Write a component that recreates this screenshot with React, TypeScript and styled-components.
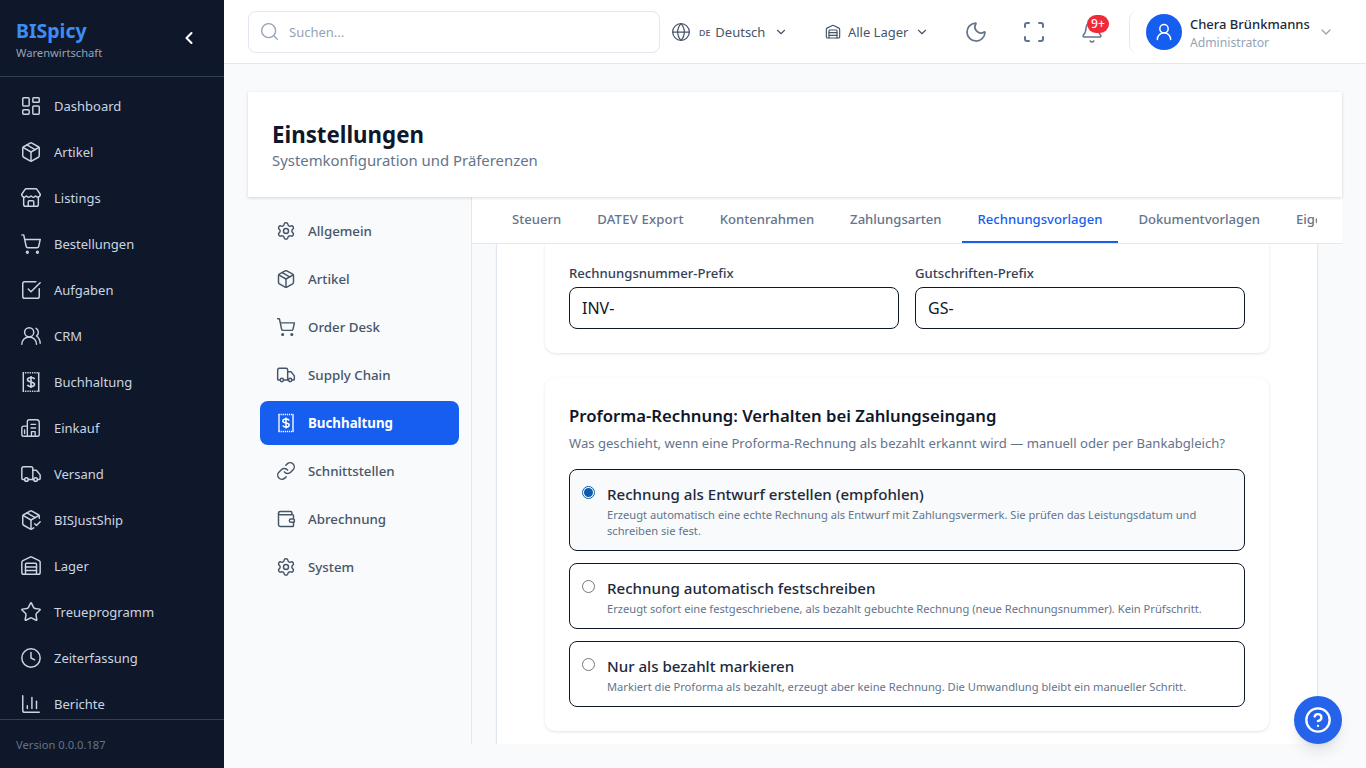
import React from "react";
import styled, { createGlobalStyle } from "styled-components";
import {
  LayoutDashboard, Package, Store, ShoppingCart, SquareCheckBig, UsersRound, Truck, Warehouse, Star, Clock, ChartColumn,
  ChevronLeft, ChevronDown, Search, Globe, Moon, Scan, Bell, UserRound, Settings, Link, Wallet, CircleHelp, PackageCheck,
} from "lucide-react";

const Global = createGlobalStyle`
  * { box-sizing: border-box; }
  html, body { margin: 0; padding: 0; height: 100%; overflow: hidden; }
  body { font-family: "Noto Sans", "Liberation Sans", sans-serif; background: #f8fafc; color: #0f172a; }
`;

const Shell = styled.div`
  display: flex; width: 1366px; height: 768px; overflow: hidden;
`;
const Sidebar = styled.aside`
  width: 224px; flex: none; height: 768px; background: #0f172a; display: flex; flex-direction: column;
`;
const Brand = styled.div`
  height: 77px; flex: none; border-bottom: 1px solid #334155; padding: 19px 26px 0 16px;
  display: flex; justify-content: space-between; align-items: flex-start;
`;
const BrandName = styled.div`
  font-size: 19.5px; line-height: 24px; font-weight: 700; color: #3b8ef6;
`;
const BrandSub = styled.div`
  font-size: 11.2px; line-height: 16px; color: #94a3b8; margin-top: 2px;
`;
const Collapse = styled.span`
  color: #fff; display: flex; margin-top: 9px; margin-right: -1px;
`;
const SideNav = styled.nav`
  flex: 1; min-height: 0; overflow: hidden; padding-top: 6px;
`;
const SideItem = styled.div`
  height: 46px; display: flex; align-items: center; gap: 12px; padding-left: 20px;
  color: #cbd5e1; font-size: 13px;
  svg { flex: none; }
`;
const SideFoot = styled.div`
  height: 49px; flex: none; border-top: 1px solid #334155; padding: 17px 16px 0;
  font-size: 11.2px; line-height: 16px; color: #64748b;
`;
const Main = styled.div`
  flex: 1; min-width: 0; display: flex; flex-direction: column; position: relative;
`;
const Header = styled.header`
  height: 64px; flex: none; background: #fff; border-bottom: 1px solid #e2e8f0;
  display: flex; align-items: center; padding-left: 24px;
`;
const SearchBox = styled.div`
  width: 412px; height: 42px; border: 1px solid #e2e8f0; border-radius: 8px; display: flex; align-items: center;
  gap: 9px; padding-left: 10px; color: #94a3b8; font-size: 13px; background: #fff; flex: none;
`;
const Lang = styled.div`
  display: flex; align-items: center; margin-left: 11px; color: #475569; font-size: 13px; flex: none; white-space: nowrap;
`;
const Small = styled.span`
  font-size: 11px; margin: 0 5px 0 8px; font-variant: small-caps; text-transform: lowercase;
`;
const LangChevron = styled(ChevronDown)`
  margin-left: 9px;
`;
const Depot = styled.div`
  display: flex; align-items: center; color: #475569; font-size: 13px; margin-left: 37px; flex: none; white-space: nowrap;
`;
const DepotLabel = styled.span`
  margin-left: 6.5px;
`;
const DepotChevron = styled(ChevronDown)`
  margin-left: 6.5px;
`;
const IconBtn = styled.span<{ $ml: number }>`
  display: flex; color: #64748b; margin-left: ${p => p.$ml}px; position: relative; flex: none;
`;
const Badge = styled.span`
  position: absolute; left: 7px; top: -5px; height: 18px; min-width: 22px; border-radius: 9px; background: #ef2b3a;
  color: #fff; font-size: 12px; line-height: 18px; text-align: center; font-weight: 500;
`;
const UserBox = styled.div`
  display: flex; align-items: center; margin-left: 25px; padding-left: 16px; height: 44px;
  border-left: 1px solid #e2e8f0; border-radius: 10px 0 0 10px; flex: none;
`;
const Avatar = styled.div`
  width: 36px; height: 36px; border-radius: 50%; background: #155eef; color: #fff; display: flex; align-items: center; justify-content: center;
`;
const UserText = styled.div`
  margin-left: 8px; width: 128px; padding-top: 2px;
`;
const UserName = styled.div`
  font-size: 13px; line-height: 18px; font-weight: 500; color: #1e293b; white-space: nowrap;
`;
const UserRole = styled.div`
  font-size: 12.2px; line-height: 16px; color: #94a3b8; margin-top: 2px;
`;
const Content = styled.main`
  flex: 1; min-height: 0; padding: 28px 24px 24px; display: flex; flex-direction: column;
`;
const TitleCard = styled.div`
  height: 105px; flex: none; background: #fff; box-shadow: 0 1px 3px rgba(15,23,42,.16); padding: 28px 24px 0;
  position: relative; z-index: 1;
`;
const Title = styled.h1`
  margin: 0; font-size: 22.3px; line-height: 30px; font-weight: 700; color: #0f172a;
`;
const Subtitle = styled.p`
  margin: 0; font-size: 14.9px; line-height: 20px; color: #64748b;
`;
const Panels = styled.div`
  flex: 1; min-height: 0; display: flex;
`;
const SettingsNav = styled.nav`
  width: 224px; flex: none; border-right: 1px solid #e2e8f0; padding: 12px 12px 0;
  display: flex; flex-direction: column; gap: 4px;
`;
const SettingsItem = styled.div<{ $active?: boolean }>`
  height: 44px; border-radius: 8px; display: flex; align-items: center; gap: 12px; padding-left: 16px;
  font-size: 13.3px; font-weight: ${p => p.$active ? 700 : 500};
  color: ${p => p.$active ? "#fff" : "#475569"}; background: ${p => p.$active ? "#155eef" : "transparent"};
`;
const Right = styled.div`
  flex: 1; min-width: 0; display: flex; flex-direction: column; background: #fff;
`;
const Tabs = styled.div`
  height: 47px; flex: none; background: #fff; border-bottom: 1px solid #e2e8f0; display: flex; padding: 0 24px; overflow: hidden;
`;
const TabRow = styled.div`
  display: flex; gap: 4px; overflow: hidden; width: 821px;
`;
const Tab = styled.div<{ $active?: boolean; $track?: boolean }>`
  height: 46px; padding: 0 16px; display: flex; align-items: center; white-space: nowrap; flex: none;
  font-size: 13.1px; font-weight: 500; color: ${p => p.$active ? "#155eef" : "#64748b"};
  letter-spacing: ${p => p.$track ? "0.2px" : "0"};
  border-bottom: 2px solid ${p => p.$active ? "#155eef" : "transparent"};
`;
const Scroll = styled.div`
  flex: 1; min-height: 0; overflow: hidden; background: #f8fafc; padding: 0 24px;
`;
const Sheet = styled.div`
  background: #fff; height: 100%; border-left: 1px solid #e2e8f0; border-right: 1px solid #e2e8f0;
  padding: 0 48px; box-shadow: 0 1px 2px rgba(15,23,42,.05);
`;
const Card = styled.section`
  background: #fff; border-radius: 0 0 10px 10px; box-shadow: 0 1px 3px rgba(15,23,42,.12); padding: 20px 24px 24px;
  & + & { border-radius: 10px; margin-top: 25px; padding: 26px 24px 24px; }
`;
const FieldGrid = styled.div`
  display: grid; grid-template-columns: 1fr 1fr; gap: 16px;
`;
const Label = styled.label`
  display: block; font-size: 13.15px; line-height: 18px; font-weight: 500; color: #334155; margin-bottom: 5px;
`;
const Input = styled.div`
  height: 42px; border: 1px solid #0f172a; border-radius: 8px; padding: 0 12px; display: flex; align-items: center; font-size: 16px; color: #0f172a;
`;
const CardTitle = styled.h2`
  margin: 0; font-size: 16.7px; line-height: 24px; font-weight: 600; color: #0f172a;
`;
const CardText = styled.p`
  margin: 5px 0 16px; font-size: 13.1px; line-height: 20px; color: #64748b;
`;
const Options = styled.div`
  display: flex; flex-direction: column; gap: 12px;
`;
const Option = styled.div<{ $checked?: boolean }>`
  border: 1px solid #0f172a; border-radius: 8px; padding: 14px 12px 11px; display: flex; gap: 12px;
  background: ${p => p.$checked ? "#f8fafc" : "#fff"};
`;
const Radio = styled.span<{ $checked?: boolean }>`
  width: 13px; height: 13px; flex: none; border-radius: 50%; margin-top: 1.5px;
  border: 1px solid ${p => p.$checked ? "#0b5cad" : "#767676"}; background: #fff;
  display: flex; align-items: center; justify-content: center;
  &::after { content: ""; width: 9px; height: 9px; border-radius: 50%; background: ${p => p.$checked ? "#0b5cad" : "transparent"}; }
`;
const OptionBody = styled.div`
  flex: 1; min-width: 0;
`;
const OptionTitle = styled.div`
  font-size: 15.1px; line-height: 20px; font-weight: 500; color: #1e293b;
`;
const OptionText = styled.div`
  font-size: 11.15px; line-height: 16px; color: #64748b; margin-top: 3px;
`;
const Help = styled.div`
  position: absolute; right: 24px; bottom: 24px; width: 48px; height: 48px; border-radius: 50%; background: #2563eb; color: #fff;
  display: flex; align-items: center; justify-content: center; box-shadow: 0 10px 15px -3px rgba(0,0,0,.1), 0 4px 6px -4px rgba(0,0,0,.1);
`;

const Receipt = ({ size = 22 }: { size?: number }) => (
  <svg width={size} height={size} viewBox="0 0 24 24" fill="none" stroke="currentColor" strokeWidth="1.6">
    <path d="M3.6 1.5v21M20.4 1.5v21" />
    <path d="M3 1.8h18M3 22.2h18" strokeDasharray="1.5 1" />
    <path d="M15.8 9c-.4-1.2-1.9-1.9-3.8-1.9-2.2 0-3.8 1-3.8 2.5 0 3.3 7.6 1.7 7.6 4.8 0 1.5-1.6 2.5-3.8 2.5-1.9 0-3.4-.7-3.8-1.9M12 5.4v13.2" strokeWidth="1.8" />
  </svg>
);

const Office = ({ size = 22 }: { size?: number }) => (
  <svg width={size} height={size} viewBox="0 0 24 24" fill="none" stroke="currentColor" strokeWidth="1.5" strokeLinejoin="round" strokeLinecap="round">
    <path d="M8 21V5a2 2 0 0 1 2-2h8a3 3 0 0 1 3 3v13a2 2 0 0 1-2 2H8Z" />
    <path d="M8 10H4a2 2 0 0 0-2 2v7a2 2 0 0 0 2 2h4M5 14v4" />
    <path d="M12 8h5M12 12h5M12.5 21v-5h4v5" />
  </svg>
);

const sideItems: [any, string][] = [
  [LayoutDashboard, "Dashboard"], [Package, "Artikel"], [Store, "Listings"], [ShoppingCart, "Bestellungen"],
  [SquareCheckBig, "Aufgaben"], [UsersRound, "CRM"], [Receipt, "Buchhaltung"], [Office, "Einkauf"], [Truck, "Versand"],
  [PackageCheck, "BISJustShip"], [Warehouse, "Lager"], [Star, "Treueprogramm"], [Clock, "Zeiterfassung"], [ChartColumn, "Berichte"],
];
const settingsItems: [any, string][] = [
  [Settings, "Allgemein"], [Package, "Artikel"], [ShoppingCart, "Order Desk"], [Truck, "Supply Chain"], [Receipt, "Buchhaltung"],
  [Link, "Schnittstellen"], [Wallet, "Abrechnung"], [Settings, "System"],
];
const tabs = ["Steuern", "DATEV Export", "Kontenrahmen", "Zahlungsarten", "Rechnungsvorlagen", "Dokumentvorlagen", "Eigene Felder"];
const options = [
  ["Rechnung als Entwurf erstellen (empfohlen)", "Erzeugt automatisch eine echte Rechnung als Entwurf mit Zahlungsvermerk. Sie prüfen das Leistungsdatum und schreiben sie fest.", true],
  ["Rechnung automatisch festschreiben", "Erzeugt sofort eine festgeschriebene, als bezahlt gebuchte Rechnung (neue Rechnungsnummer). Kein Prüfschritt.", false],
  ["Nur als bezahlt markieren", "Markiert die Proforma als bezahlt, erzeugt aber keine Rechnung. Die Umwandlung bleibt ein manueller Schritt.", false],
] as const;

export default function App() {
  return (
    <Shell>
      <Global />
      <Sidebar>
        <Brand>
          <div><BrandName>BISpicy</BrandName><BrandSub>Warenwirtschaft</BrandSub></div>
          <Collapse><ChevronLeft size={20} strokeWidth={2.5} /></Collapse>
        </Brand>
        <SideNav>
          {sideItems.map(([I, t]) => <SideItem key={t}><I size={22} strokeWidth={1.6} />{t}</SideItem>)}
        </SideNav>
        <SideFoot>Version 0.0.0.187</SideFoot>
      </Sidebar>
      <Main>
        <Header>
          <SearchBox><Search size={21} strokeWidth={1.5} />Suchen...</SearchBox>
          <Lang><Globe size={20} strokeWidth={1.5} /><Small>DE</Small>Deutsch<LangChevron size={14} /></Lang>
          <Depot><Warehouse size={16} strokeWidth={1.75} /><DepotLabel>Alle Lager</DepotLabel><DepotChevron size={14} /></Depot>
          <IconBtn $ml={35}><Moon size={24} strokeWidth={1.75} /></IconBtn>
          <IconBtn $ml={34}><Scan size={24} strokeWidth={2} /></IconBtn>
          <IconBtn $ml={34}><Bell size={24} strokeWidth={1.5} /><Badge>9+</Badge></IconBtn>
          <UserBox>
            <Avatar><UserRound size={20} strokeWidth={1.75} /></Avatar>
            <UserText><UserName>Chera Brünkmanns</UserName><UserRole>Administrator</UserRole></UserText>
            <ChevronDown size={16} color="#94a3b8" />
          </UserBox>
        </Header>
        <Content>
          <TitleCard>
            <Title>Einstellungen</Title>
            <Subtitle>Systemkonfiguration und Präferenzen</Subtitle>
          </TitleCard>
          <Panels>
            <SettingsNav>
              {settingsItems.map(([I, t]) => (
                <SettingsItem key={t} $active={t === "Buchhaltung"}><I size={20} strokeWidth={1.75} />{t}</SettingsItem>
              ))}
            </SettingsNav>
            <Right>
              <Tabs>
                <TabRow>
                  {tabs.map(t => <Tab key={t} $active={t === "Rechnungsvorlagen"} $track={t === "DATEV Export"}>{t}</Tab>)}
                </TabRow>
              </Tabs>
              <Scroll>
                <Sheet>
                  <Card>
                    <FieldGrid>
                      <div><Label>Rechnungsnummer-Prefix</Label><Input>INV-</Input></div>
                      <div><Label>Gutschriften-Prefix</Label><Input>GS-</Input></div>
                    </FieldGrid>
                  </Card>
                  <Card>
                    <CardTitle>Proforma-Rechnung: Verhalten bei Zahlungseingang</CardTitle>
                    <CardText>Was geschieht, wenn eine Proforma-Rechnung als bezahlt erkannt wird — manuell oder per Bankabgleich?</CardText>
                    <Options>
                      {options.map(([t, d, c]) => (
                        <Option key={t} $checked={c}>
                          <Radio $checked={c} />
                          <OptionBody><OptionTitle>{t}</OptionTitle><OptionText>{d}</OptionText></OptionBody>
                        </Option>
                      ))}
                    </Options>
                  </Card>
                </Sheet>
              </Scroll>
            </Right>
          </Panels>
        </Content>
        <Help><CircleHelp size={28} strokeWidth={2} /></Help>
      </Main>
    </Shell>
  );
}
